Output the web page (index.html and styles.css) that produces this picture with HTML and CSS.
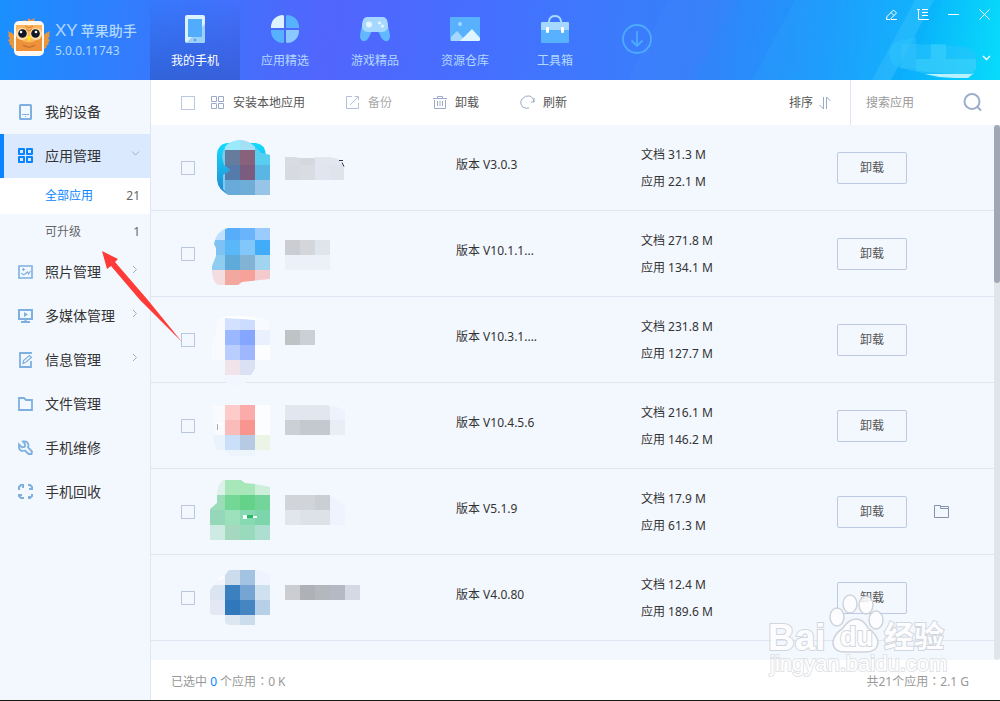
FILE: index.html
```html
<!DOCTYPE html>
<html lang="zh-CN">
<head>
<meta charset="utf-8">
<meta name="viewport" content="width=device-width, initial-scale=1">
<title>XY苹果助手</title>
<link rel="stylesheet" href="styles.css">
</head>
<body>
<header class="header">
  <svg class="rays" width="400" height="80" viewBox="0 0 400 80" aria-hidden="true">
    <path d="M68 0H137L92 80H28Z" fill="#fff" opacity=".02"/>
    <path d="M137 0H195L152 80H92Z" fill="#29a4ff" opacity=".14"/>
    <path d="M195 0H315L272 80H152Z" fill="#2cb4ff" opacity=".22"/>
    <path d="M315 0H334L291 80H272Z" fill="#4cc8ff" opacity=".35"/>
    <path d="M334 0H344L301 80H291Z" fill="#08a8ff" opacity=".1"/>
  </svg>
  <div class="brand">
    <svg width="42" height="42" viewBox="0 0 42 42" aria-hidden="true">
      <path d="M0 14l3 2 0-1 4 4v14l-4-3 1-1-3-2 1-1-2-3 2-1-2-4 1 0ZM42 14l-3 2 0-1-4 4v14l4-3-1-1 3-2-1-1 2-3-2-1 2-4-1 0Z" fill="#e9963c"/>
      <path d="M13 6l4 0-2-3 5 1 0-3 3 2 4-2-1 3 3 1-1 2Z" fill="#f0923a"/>
      <rect x="6" y="4" width="30" height="35" rx="5" fill="#fff8f1"/>
      <path d="M8 8h26v26H8Z" fill="#fdb560"/>
      <path d="M8 18q13 15 26 0v16H8Z" fill="#ed9239"/>
      <path d="M17 9l4 2 4-2M18 12l3 2 3-2" stroke="#d87b2e" fill="none"/>
      <circle cx="14" cy="17" r="6" fill="#ffdca8"/><circle cx="28" cy="17" r="6" fill="#ffdca8"/>
      <circle cx="14.500" cy="16.500" r="4.300" fill="#101828"/><circle cx="27.500" cy="16.500" r="4.300" fill="#101828"/>
      <circle cx="13" cy="15" r="1.300" fill="#fff"/><circle cx="28" cy="15" r="1.300" fill="#fff"/>
      <path d="M19 20q2-2 4 0l-2 5Z" fill="#fff000"/>
      <path d="M15 28q2 2 3 1 3 3 6 0 1 1 3-1" stroke="#cc7331" stroke-width="1.500" fill="none"/>
    </svg>
    <div class="brand-text">
      <div class="brand-name"><span class="brand-latin">XY</span>苹果助手</div>
      <div class="brand-version">5.0.0.11743</div>
    </div>
  </div>
  <nav class="tabs">
    <a class="tab tab-active" href="#">
      <svg width="30" height="30" viewBox="0 0 30 30" aria-hidden="true"><rect x="5" y="1" width="20" height="28" rx="2" fill="#dcf1ff"/><path d="M25 10v17q0 2-2 2H6Z" fill="#9dd0f8"/><path d="M8 5h14v18H8Z" fill="#51acfb"/><circle cx="15" cy="26" r="1.300" fill="#4aa2f0"/></svg>
      我的手机</a>
    <a class="tab" href="#">
      <svg width="30" height="30" viewBox="0 0 30 30" aria-hidden="true"><path d="M14 2v12H1v-1A12 12 0 0 1 13 1Z" fill="#dcf3ff"/><path d="M16 2v12h13v-1A12 12 0 0 0 17 1Z" fill="#58b1ff"/><path d="M1 16h13v12l-1 1A12 12 0 0 1 1 17Z" fill="#58b1ff"/><path d="M16 16h13v1a12 12 0 0 1-12 12l-1-1Z" fill="#8ac8ff"/></svg>
      应用精选</a>
    <a class="tab" href="#">
      <svg width="30" height="30" viewBox="0 0 30 30" aria-hidden="true"><path d="M3 9Q0 18 0 23q1 5 5 4 3-1 5-6 2-5 5-5t5 5q2 5 5 6 4 1 5-4 0-5-3-14Z" fill="#61b8ff"/><path d="M7 3h16q4 0 5 7v3q-1 5-6 5H8q-5 0-6-5v-3q1-7 5-7Z" fill="#a6d7ff"/><circle cx="9" cy="10.500" r="3" fill="#e3f5ff"/><circle cx="19.500" cy="9" r="1.600" fill="#e3f5ff"/><circle cx="22.500" cy="12" r="1.600" fill="#e3f5ff"/></svg>
      游戏精品</a>
    <a class="tab" href="#">
      <svg width="30" height="30" viewBox="0 0 30 30" aria-hidden="true"><rect y="3" width="30" height="24" rx="1" fill="#58b1ff"/><circle cx="10" cy="10" r="2" fill="#a6d7ff"/><path d="M1 27v-4l6-6 9 10Z" fill="#a6d7ff"/><path d="M10 27l12-12 8 9v2l-1 1Z" fill="#e0f5ff"/></svg>
      资源仓库</a>
    <a class="tab" href="#">
      <svg width="30" height="30" viewBox="0 0 30 30" aria-hidden="true"><path d="M9 9V7q1-5 6-5t6 5v2" stroke="#a6d7ff" stroke-width="2" fill="none"/><rect x="1" y="8" width="28" height="21" rx="1" fill="#58b1ff"/><path d="M2 8h26l1 1v7H1V9Z" fill="#a6d7ff"/><rect x="6" y="13" width="3" height="6" rx="1" fill="#fff"/><rect x="21" y="13" width="3" height="6" rx="1" fill="#fff"/></svg>
      工具箱</a>
  </nav>
  <button class="icon-button download" aria-label="下载">
    <svg width="30" height="30" viewBox="0 0 30 30" fill="none" stroke="#4cabff" stroke-width="1.800"><circle cx="15" cy="15" r="14"/><path d="M15 7v15M9.500 16.500L15 22l5.500-5.500"/></svg>
  </button>
  <div class="header-right">
    <div class="window-buttons">
      <button class="icon-button" aria-label="反馈"><svg width="13" height="13" viewBox="0 0 13 13" fill="none" stroke="#fff"><path d="M2 8.500L8.500 2l3 3L5 11.500H1.500ZM6 4.500l3 3M6 11.500h6"/></svg></button>
      <button class="icon-button" aria-label="菜单"><svg width="13" height="13" viewBox="0 0 13 13" fill="none" stroke="#fff"><path d="M2.500 2v9.500H13M1 1.500h3M6 1.500h6M6 4.500h6M6 7.500h6"/></svg></button>
      <button class="icon-button" aria-label="最小化"><svg width="13" height="13" viewBox="0 0 13 13" stroke="#fff"><path d="M1 6.500h11"/></svg></button>
      <button class="icon-button" aria-label="关闭"><svg width="13" height="13" viewBox="0 0 13 13" stroke="#fff"><path d="M1.500 1.500l10 10M11.500 1.500l-10 10"/></svg></button>
    </div>
    <div class="account">
      <svg width="88" height="42" viewBox="0 0 88 42" aria-hidden="true"><path d="M0 14Q3 3 15 3L27 0v7l40 2q20 1 20 13v11q-6 8-16 7L36 37 12 31Q0 29 0 14Z" fill="#2bc3fb" opacity=".55"/><path d="M12 7h15v25l-15-1Z" fill="#3fc3fd" opacity=".4"/><path d="M42 7h15v15H42ZM27 22h60v10l-7 6-53-4Z" fill="#54dcfd" opacity=".35"/><path d="M36 37h46l3-1-6 5H66l-16-1Z" fill="#b9f1ff"/></svg>
      <button class="icon-button" aria-label="账户"><svg width="9" height="6" viewBox="0 0 9 6" fill="none" stroke="#fff" stroke-width="1.300"><path d="M1 1l3.500 3.500L8 1"/></svg></button>
    </div>
  </div>
</header>

<div class="body">
  <nav class="sidebar">
    <a class="side-item" href="#"><svg width="16" height="16" viewBox="0 0 16 16" fill="none" stroke="#7db0e0" stroke-width="2"><rect x="2" y="1" width="11" height="14" rx=".5"/><path d="M4 10.500h7M7 12.500h1" stroke-width="1"/></svg><span>我的设备</span></a>
    <a class="side-item side-active" href="#"><svg width="16" height="16" viewBox="0 0 16 16" fill="none" stroke="#0a85ff" stroke-width="2" stroke-linejoin="round"><path d="M1 1h5v5H1ZM9 1h5v5H9ZM1 9h5v5H1ZM9 9h5v5H9Z"/></svg><span>应用管理</span><svg class="caret" width="9" height="9" viewBox="0 0 9 9"><path d="M1 2.500L4.500 6 8 2.500"/></svg></a>
    <a class="sub-item sub-active" href="#"><span>全部应用</span><span class="count">21</span></a>
    <a class="sub-item" href="#"><span>可升级</span><span class="count">1</span></a>
    <a class="side-item" href="#"><svg width="16" height="16" viewBox="0 0 16 16" fill="none" stroke="#7db0e0" stroke-width="1.600"><path d="M1 2h13v12H1Z"/><path d="M3.500 9q1.500 2.500 3.500 1l2.500-2 1 2 2-3M5.500 4v3M4 5.500h3" stroke-width="1.200"/></svg><span>照片管理</span><svg class="caret" width="9" height="9" viewBox="0 0 9 9"><path d="M2 1l3.500 3.500L2 8"/></svg></a>
    <a class="side-item" href="#"><svg width="16" height="16" viewBox="0 0 16 16" fill="none" stroke="#7db0e0" stroke-width="2"><path d="M1 2h13v9H1ZM7.500 11v3M3 14h9"/><path d="M6 4l4 2.500L6 9Z" fill="#7db0e0" stroke="none"/></svg><span>多媒体管理</span><svg class="caret" width="9" height="9" viewBox="0 0 9 9"><path d="M2 1l3.500 3.500L2 8"/></svg></a>
    <a class="side-item" href="#"><svg width="16" height="16" viewBox="0 0 16 16" fill="none" stroke="#7db0e0" stroke-width="1.800"><path d="M13 2V1H2v14h11V9"/><path d="M5 11.500l.5-3 6-5 2 2-6 5Z" stroke-width="1.200"/></svg><span>信息管理</span><svg class="caret" width="9" height="9" viewBox="0 0 9 9"><path d="M2 1l3.500 3.500L2 8"/></svg></a>
    <a class="side-item" href="#"><svg width="16" height="16" viewBox="0 0 16 16" fill="none" stroke="#7db0e0" stroke-width="1.800"><path d="M1 2h5l2 2h6v10H1Z"/></svg><span>文件管理</span></a>
    <a class="side-item" href="#"><svg width="16" height="16" viewBox="0 0 16 16" fill="none" stroke="#7db0e0" stroke-width="1.800"><path d="M5 1.500q5-1 5.500 4l-.5 2 4 4-.5 2.500h-3L7 10.500q-5 1.500-6-2.500V4.500l3 3 3-1V4Z"/></svg><span>手机维修</span></a>
    <a class="side-item" href="#"><svg width="16" height="16" viewBox="0 0 16 16" fill="none" stroke="#7db0e0" stroke-width="2"><path d="M1 6V3l2-2h3M5 1v3M10 1h2l2 2v3M11 5h3M14 10v2l-2 2h-2M11 12v3M6 14H3l-2-2v-2M1 11h3"/></svg><span>手机回收</span></a>
  </nav>

  <main class="main">
    <div class="toolbar">
      <input class="check" type="checkbox" aria-label="全选">
      <div class="tools">
        <button class="tool"><svg width="14" height="14" viewBox="0 0 14 14" fill="none" stroke="#9aaac8"><path d="M.5.5h5v5h-5ZM7.500.5h5v5h-5ZM.5 7.500h5v5h-5ZM7.500 7.500h5v5h-5Z"/></svg>安装本地应用</button>
        <button class="tool" disabled><svg width="14" height="14" viewBox="0 0 14 14" fill="none" stroke="#b4c1da"><path d="M6 .5H.5v12h12V7M4 9l8-8M8.500.5h4V4"/></svg>备份</button>
        <button class="tool"><svg width="14" height="14" viewBox="0 0 14 14" fill="none" stroke="#9aaac8"><path d="M0 2.500h14M4.500 2V.5h5V2M1.500 4v8.500h11V4M4.500 5v5M7 5v5M9.500 5v5"/></svg>卸载</button>
        <button class="tool"><svg width="15" height="15" viewBox="0 0 15 15" fill="none" stroke="#9aaac8"><path d="M9 13q-3 1-6-1-4-4-1-8 3-4 8-3 4 2 4 6M14 3v4h-3"/></svg>刷新</button>
      </div>
      <button class="sort">排序<svg width="12" height="14" viewBox="0 0 12 14" fill="none" stroke="#9aaac8"><path d="M4.500 1v12L.5 9M7.500 13V1l4 4"/></svg></button>
      <form class="search">
        <input class="search-input" type="text" placeholder="搜索应用" aria-label="搜索应用">
        <button class="icon-button" type="button" aria-label="搜索"><svg width="20" height="20" viewBox="0 0 20 20" fill="none" stroke="#9eadcb" stroke-width="2"><circle cx="9" cy="8.500" r="7.500"/><path d="M14 13.500l4 4"/></svg></button>
      </form>
    </div>

    <div class="list">
      <ul class="rows">
        <li class="row">
          <input class="check" type="checkbox" aria-label="选择应用 1">
          <svg class="mosaic" width="60" height="85" viewBox="0 0 60 85" aria-hidden="true">
            <defs><linearGradient id="cyan" x1="0" y1="0" x2="0" y2="1"><stop offset="0" stop-color="#12dcff"/><stop offset="1" stop-color="#2484cf"/></linearGradient>
            <clipPath id="c1"><path d="M12 32q1-10 6-13 12-7 22-1l4 3 7 7 9 2v40H18l-5-6V50l7-5-6-5Z"/></clipPath></defs>
            <path d="M17 18h29q9 1 10 12v40H20Q8 66 7 55V29q1-10 10-11Z" fill="url(#cyan)"/>
            <g clip-path="url(#c1)"><path d="M10 10h50v60H10Z" fill="#76cdf1"/><path d="M15 10h15v15H15Z" fill="#9beafb"/><path d="M30 10h15v15H30Z" fill="#a2e0f5"/><path d="M15 25h15v15H15Z" fill="#667c9c"/><path d="M30 25h15v15H30Z" fill="#88617a"/><path d="M45 20h15v20H45Z" fill="#58cff1"/><path d="M15 40h15v15H15Z" fill="#547baa"/><path d="M30 40h15v15H30Z" fill="#7b5b7e"/><path d="M45 40h15v15H45Z" fill="#5ab6e3"/><path d="M15 55h15v15H15Z" fill="#68abdb"/><path d="M30 55h15v15H30Z" fill="#6fadd9"/><path d="M45 55h15v15H45Z" fill="#96c5e8"/></g>
          </svg>
          <svg class="mosaic" width="75" height="85" viewBox="0 0 75 85" aria-hidden="true"><path d="M0 32h10l5 1v7H0Z" fill="#d8dbe0"/><path d="M15 33h15v7H15Z" fill="#d5d8de"/><path d="M30 32h15l8 2 5 6H30Z" fill="#e2e6ee"/><path d="M0 40h15v15H0Z" fill="#d7dadf"/><path d="M15 40h15v15H15Z" fill="#d9dce3"/><path d="M30 40h15v15H30Z" fill="#e2e5ef"/><path d="M45 40h14v15H45Z" fill="#dfe3eb"/><path d="M54 35.500h4M57 37.500l2 4" stroke="#334"/></svg>
          <span class="version">版本 V3.0.3</span>
          <span class="sizes"><span>文档 31.3 M</span><span>应用 22.1 M</span></span>
          <button class="uninstall">卸载</button>
        </li>
        <li class="row">
          <input class="check" type="checkbox" aria-label="选择应用 2">
          <svg class="mosaic" width="60" height="85" viewBox="0 0 60 85" aria-hidden="true">
            <clipPath id="c2"><path d="M18 17h42v51l-10 1-18 2-4 3H8Q3 71 2 62V55l4-10V37l-2-4Q6 20 18 17Z"/></clipPath>
            <g clip-path="url(#c2)"><path d="M0 17h15v12H0Z" fill="#bfdffe"/><path d="M15 17h15v12H15Z" fill="#58adfb"/><path d="M30 17h15v12H30Z" fill="#69b4fb"/><path d="M45 17h15v12H45Z" fill="#99cbfd"/><path d="M0 29h15v15H0Z" fill="#7dc2f3"/><path d="M15 29h15v15H15Z" fill="#5ab8f9"/><path d="M30 29h15v15H30Z" fill="#82c7fa"/><path d="M45 29h15v15H45Z" fill="#41acf8"/><path d="M0 44h15v15H0Z" fill="#8ecdef"/><path d="M15 44h15v15H15Z" fill="#5eaad8"/><path d="M30 44h15v15H30Z" fill="#82b3d5"/><path d="M45 44h15v15H45Z" fill="#a1d4ef"/><path d="M0 59h15v15H0Z" fill="#f3dde1"/><path d="M15 59h15v15H15Z" fill="#f2a89e"/><path d="M30 59h15v15H30Z" fill="#f6a29a"/><path d="M45 59h15v15H45Z" fill="#f4cacd"/></g>
          </svg>
          <svg class="mosaic" width="75" height="85" viewBox="0 0 75 85" aria-hidden="true"><path d="M0 29h15v15H0Z" fill="#cbcdd2"/><path d="M15 29h15v15H15Z" fill="#d3d6da"/><path d="M30 29h15v15H30Z" fill="#dfe5ed"/><path d="M0 44h45v15H0Z" fill="#ecf0f8"/></svg>
          <span class="version">版本 V10.1.1...</span>
          <span class="sizes"><span>文档 271.8 M</span><span>应用 134.1 M</span></span>
          <button class="uninstall">卸载</button>
        </li>
        <li class="row">
          <input class="check" type="checkbox" aria-label="选择应用 3">
          <svg class="mosaic" width="60" height="85" viewBox="0 0 60 85" aria-hidden="true">
            <path d="M12 70h28q0 20-14 20T12 70Z" fill="#f1f6ff"/><path d="M8 22q4-3 10-3h28q6 0 14 6v38H2V48l3-10Z" fill="#f8fafe"/><path d="M15 20q15-3 32 2l-2 3-30-3Z" fill="#fff"/>
            <path d="M15 21l15 1v11H15Z" fill="#d3e0ff"/><path d="M30 22l15 1v10H30Z" fill="#cbdcfe"/><path d="M15 33h15v15H15Z" fill="#9bb7ff"/><path d="M30 33h15v15H30Z" fill="#84a6ff"/><path d="M45 33h15v15H45Z" fill="#e9f1ff"/><path d="M15 48h15v15H15Z" fill="#bacdff"/><path d="M30 48h15v15H30Z" fill="#9fb7ff"/><path d="M45 48h15v15H45Z" fill="#fcfdff"/><path d="M15 63h15v15H15Z" fill="#f1e3ea"/><path d="M30 63h15v9l-4 6H30Z" fill="#dbe1f5"/>
          </svg>
          <svg class="mosaic" width="75" height="85" viewBox="0 0 75 85" aria-hidden="true"><path d="M0 33h15v15H0Z" fill="#bfc3c6"/><path d="M15 33h15v15H15Z" fill="#cbd0d7"/></svg>
          <span class="version">版本 V10.3.1....</span>
          <span class="sizes"><span>文档 231.8 M</span><span>应用 127.7 M</span></span>
          <button class="uninstall">卸载</button>
        </li>
        <li class="row">
          <input class="check" type="checkbox" aria-label="选择应用 4">
          <svg class="mosaic" width="60" height="85" viewBox="0 0 60 85" aria-hidden="true">
            <path d="M2 22h13v30H5Z" fill="#f8fafe"/><path d="M7.500 41v6" stroke="#aaa"/><path d="M8 40h5l-5 5Z" fill="#fff"/><path d="M15 22h15v15H15Z" fill="#fdcbca"/><path d="M30 22h15v15H30Z" fill="#fbacaa"/><path d="M45 22h15v30H45Z" fill="#fcfdff"/><path d="M15 37h15v15H15Z" fill="#f9bcba"/><path d="M30 37h15v15H30Z" fill="#f9958f"/><path d="M4 52h11v15H7l-3-7Z" fill="#eaf3fc"/><path d="M15 52h15v15H15Z" fill="#c9e0f8"/><path d="M30 52h15v15H30Z" fill="#b6cae3"/><path d="M45 52h15v15H45Z" fill="#ebf5e5"/><path d="M15 67h30v6H20Z" fill="#eef4fc"/>
          </svg>
          <svg class="mosaic" width="75" height="85" viewBox="0 0 75 85" aria-hidden="true"><path d="M0 22h42l3 1v14H0Z" fill="#e2e6ef"/><path d="M45 23q9 0 15 5v9H45Z" fill="#edf3fd"/><path d="M0 37h15v15H0Z" fill="#cccfd4"/><path d="M15 37h30v15H15Z" fill="#c4c8cf"/><path d="M45 37h15v15H45Z" fill="#e8edf6"/></svg>
          <span class="version">版本 V10.4.5.6</span>
          <span class="sizes"><span>文档 216.1 M</span><span>应用 146.2 M</span></span>
          <button class="uninstall">卸载</button>
        </li>
        <li class="row">
          <input class="check" type="checkbox" aria-label="选择应用 5">
          <svg class="mosaic" width="60" height="85" viewBox="0 0 60 85" aria-hidden="true">
            <clipPath id="c5"><path d="M13 11h18l4 3 10 1 15 3v53H0V40l7-6V26q0-10 6-15Z"/></clipPath>
            <g clip-path="url(#c5)"><path d="M0 11h15v15H0Z" fill="#dcf2e9"/><path d="M15 11h30v15H15Z" fill="#a7e7ba"/><path d="M45 11h15v15H45Z" fill="#cceedb"/><path d="M0 26h15v15H0Z" fill="#9bddb8"/><path d="M15 26h15v15H15Z" fill="#73d896"/><path d="M30 26h15v15H30Z" fill="#64d289"/><path d="M45 26h15v15H45Z" fill="#73d599"/><path d="M0 41h15v15H0Z" fill="#94d8b9"/><path d="M15 41h15v15H15Z" fill="#9ce1bc"/><path d="M30 41h15v15H30Z" fill="#86d9b1"/><path d="M45 41h15v15H45Z" fill="#7cd5ab"/><path d="M0 56h15v15H0Z" fill="#cdebe3"/><path d="M15 56h15v15H15Z" fill="#a6d7bf"/><path d="M30 56h15v15H30Z" fill="#99dabd"/><path d="M45 56h15v15H45Z" fill="#acdfcf"/><path d="M33 46h4v4h-4ZM43 47h4v2h-4Z" fill="#fff"/><path d="M37 46h6v3h-6Z" fill="#27b966"/></g>
          </svg>
          <svg class="mosaic" width="75" height="85" viewBox="0 0 75 85" aria-hidden="true"><path d="M0 26h30v15H0Z" fill="#d1d4d9"/><path d="M30 26h15v15H30Z" fill="#cbced3"/><path d="M45 27q10 3 15 11v18H45Z" fill="#eef3fd"/><path d="M0 41h15v15H0Z" fill="#e2e5ea"/><path d="M15 41h30v15H15Z" fill="#dde1e8"/></svg>
          <span class="version">版本 V5.1.9</span>
          <span class="sizes"><span>文档 17.9 M</span><span>应用 61.3 M</span></span>
          <button class="uninstall">卸载</button>
          <button class="icon-button" aria-label="打开文件夹"><svg width="15" height="13" viewBox="0 0 15 13" fill="none" stroke="#8592ab"><path d="M.5.5h6v3h8v9H.5ZM6.500 1.500h8v2"/></svg></button>
        </li>
        <li class="row">
          <input class="check" type="checkbox" aria-label="选择应用 6">
          <svg class="mosaic" width="60" height="85" viewBox="0 0 60 85" aria-hidden="true">
            <path d="M4 30q5-9 11-10v10Z" fill="#f3f7fd"/><path d="M8 25l6-4" stroke="#fff" stroke-width="2"/><path d="M19 15h11v15H15V20Z" fill="#ccdcec"/><path d="M30 15h15v15H30Z" fill="#a4c2e1"/><path d="M45 15l15 4v11H45Z" fill="#eef4fd"/><path d="M4 30h11v15H0V35Z" fill="#dae5f1"/><path d="M15 30h15v15H15Z" fill="#3b80bf"/><path d="M30 30h15v15H30Z" fill="#76a5d3"/><path d="M45 30h15v15H45Z" fill="#cfe1ef"/><path d="M0 45h15v15H2l-2-2Z" fill="#e2e9f4"/><path d="M15 45h15v15H15Z" fill="#2e78bb"/><path d="M30 45h15v15H30Z" fill="#4585c2"/><path d="M45 45h15v15H45Z" fill="#b6d0e7"/><path d="M15 60h15v10H19l-4-2Z" fill="#dce7f2"/><path d="M30 60h15v10H30Z" fill="#cbdded"/>
          </svg>
          <svg class="mosaic" width="75" height="85" viewBox="0 0 75 85" aria-hidden="true"><path d="M0 30h15v15H0Z" fill="#cccdd0"/><path d="M15 30h15v15H15Z" fill="#aeb2b6"/><path d="M30 30h15v15H30Z" fill="#b4b7bb"/><path d="M45 30h15v15H45Z" fill="#b4b9c3"/><path d="M60 30h15v15H60Z" fill="#d5d9e3"/></svg>
          <span class="version">版本 V4.0.80</span>
          <span class="sizes"><span>文档 12.4 M</span><span>应用 189.6 M</span></span>
          <button class="uninstall">卸载</button>
        </li>
      </ul>
      <div class="scroll-track"><div class="scroll-thumb"></div></div>
    </div>

    <footer class="status">
      <span>已选中 <b class="selected">0</b> 个应用<span class="colon" lang="zh-TW">：</span>0 K</span>
      <span>共21个应用<span class="colon" lang="zh-TW">：</span>2.1 G</span>
    </footer>
  </main>
</div>

<svg class="pointer" width="84" height="94" viewBox="0 0 84 94" aria-hidden="true"><path d="M2 2l16 8-3 3 32 37 35 43L40 51 11 17l-4 3Z" fill="#ff3b38"/></svg>

<svg class="watermark" width="184" height="90" viewBox="0 0 184 90" aria-hidden="true">
  <g fill="#fff" stroke="#c9ced6" stroke-width="1.500" opacity=".85">
    <ellipse cx="73" cy="28" rx="7" ry="9"/><ellipse cx="86" cy="15" rx="7" ry="9"/><ellipse cx="102" cy="16" rx="7" ry="9"/><ellipse cx="112" cy="31" rx="7" ry="9"/>
    <path d="M92 30q7 0 12 9 10 7 10 15-1 9-12 9H81q-12 0-12-10 1-8 9-13 7-10 14-10Z"/>
  </g>
  <g class="watermark-text">
    <text x="4" y="61" class="wm-latin">Bai</text>
    <text x="76" y="57" class="wm-du">du</text>
    <text x="120" y="58" class="wm-cjk">经验</text>
    <text x="6" y="82" class="wm-url">jingyan.baidu.com</text>
  </g>
</svg>
</body>
</html>
```

FILE: styles.css
```css
* { box-sizing: border-box; }

body {
  margin: 0;
  min-height: 100vh;
  position: relative;
  display: flex;
  flex-direction: column;
  overflow-x: hidden;
  border-bottom: 1px solid #14180f;
  background: #f3f8ff;
  color: #333;
  font: 12px/18px "Noto Sans", "Noto Sans CJK SC", sans-serif;
}

a { color: inherit; text-decoration: none; }

button {
  padding: 0;
  border: 0;
  background: none;
  color: inherit;
  font: inherit;
}

svg { display: block; flex: none; }

.icon-button { display: grid; place-items: center; }

/* header */
.header {
  position: relative;
  display: flex;
  height: 80px;
  background: linear-gradient(97deg, #1a90ff 0%, #3778fd 16%, #5265fc 33%, #456fff 48%, #3b7cfc 63%, #347ff9 70%, #1b96fb 82%, #09b5fb 92%, #08dcfb 100%);
}

.rays { position: absolute; right: 0; top: 0; }

.brand {
  display: flex;
  width: 150px;
  padding: 17px 0 0 8px;
  gap: 5px;
  color: #b0d8ff;
}

.brand-text { padding-top: 4px; white-space: nowrap; }
.brand-name { display: flex; align-items: center; gap: 3px; font-size: 14px; line-height: 20px; font-weight: 500; }
.brand-latin { font: 17px/20px "Liberation Sans", sans-serif; }
.brand-version { line-height: 20px; font-size: 12px; }

.tabs { display: flex; }

.tab {
  display: flex;
  flex-direction: column;
  align-items: center;
  width: 90px;
  padding-top: 14px;
  gap: 8px;
  color: #b4d8ff;
}

.tab-active {
  background: linear-gradient(rgba(50, 90, 200, 0), rgba(45, 85, 195, .6));
  color: #fff;
}

.download { margin: 24px 0 auto 22px; }

.header-right {
  position: relative;
  display: flex;
  flex-direction: column;
  align-items: flex-end;
  margin-left: auto;
  padding: 8px 9px 0 0;
}

.window-buttons { display: flex; gap: 18px; }
.account { display: flex; align-items: center; gap: 5px; margin-top: 16px; }

/* layout */
.body { display: flex; flex: 1; }

.sidebar {
  flex: none;
  width: 151px;
  padding-top: 10px;
  border-right: 1px solid #dfe6f2;
}

.side-item {
  display: flex;
  align-items: center;
  height: 44px;
  padding: 0 10px 0 18px;
  gap: 11px;
  font-size: 14px;
}

.side-active {
  padding-left: 14px;
  border-left: 4px solid #0a85ff;
  background: #dbe9ff;
}

.caret {
  margin: 0 0 5px auto;
  fill: none;
  stroke: #9fafca;
}

.sub-item {
  display: flex;
  align-items: center;
  justify-content: space-between;
  height: 36px;
  padding: 0 10px 0 45px;
  color: #666;
}

.sub-active { background: #fff; color: #0a85ff; }
.count { color: #666; font-size: 12px; }

.main { display: flex; flex: 1; flex-direction: column; min-width: 0; }

.check {
  appearance: none;
  width: 14px;
  height: 14px;
  margin: 0;
  border: 1px solid #bac8df;
}

/* toolbar */
.toolbar {
  display: flex;
  align-items: center;
  height: 45px;
  padding-left: 30px;
  background: #fff;
  color: #555;
  white-space: nowrap;
}

.tools { display: flex; gap: 41px; margin-left: 16px; }
.tool { display: flex; align-items: center; gap: 8px; }
.tool:disabled { color: #aaa; }
.sort { display: flex; align-items: center; gap: 6px; margin: 0 19px 0 auto; }

.search {
  display: flex;
  align-items: center;
  justify-content: space-between;
  align-self: stretch;
  width: 150px;
  padding: 0 17px 0 15px;
  border-left: 1px solid #dfe6f2;
}

.search-input {
  width: 80px;
  padding: 0;
  border: 0;
  background: none;
  font: inherit;
}

.search-input::placeholder { color: #999; }

/* application list */
.list { display: flex; flex: 1; }
.rows { flex: 1; margin: 0; padding: 0; list-style: none; }

.row {
  display: grid;
  grid-template-columns: 29px 75px minmax(75px, 171fr) minmax(90px, 185fr) minmax(90px, 196fr) 97px 60px;
  align-items: center;
  height: 86px;
  padding-left: 30px;
  border-bottom: 1px solid #dfe6f2;
}

.row .icon-button { justify-self: start; }
.mosaic { overflow: visible; }
.version { padding-bottom: 6px; }
.sizes { display: flex; flex-direction: column; line-height: 27px; }

.uninstall {
  width: 70px;
  height: 32px;
  border: 1px solid #bccae3;
  border-radius: 2px;
  color: #555;
}

.scroll-track { width: 6px; border-radius: 3px; background: #e0e5ea; }
.scroll-thumb { height: 158px; border-radius: 3px; background: #a1a8b5; }

.status {
  display: flex;
  align-items: center;
  justify-content: space-between;
  height: 40px;
  padding: 4px 31px 0 20px;
  background: #fff;
  color: #999;
}

.selected { color: #0a85ff; font-weight: 400; }
.colon { font-family: "Noto Sans CJK TC", sans-serif; line-height: 1; }

/* overlays */
.pointer { position: absolute; left: 100px; top: 249px; pointer-events: none; }
.watermark { position: absolute; right: 52px; bottom: 21px; pointer-events: none; }

.watermark-text {
  fill: #fff;
  stroke: #ccd1d8;
  stroke-width: 2px;
  paint-order: stroke;
  opacity: .85;
}

.wm-latin { font: bold 37px "Liberation Sans", sans-serif; }
.wm-du { font: bold 27px "Liberation Sans", sans-serif; }
.wm-cjk { font: bold 30px "Noto Sans CJK SC", sans-serif; }
.wm-url { font: 22px "Liberation Sans", sans-serif; stroke: #dcdfe4; }
```
